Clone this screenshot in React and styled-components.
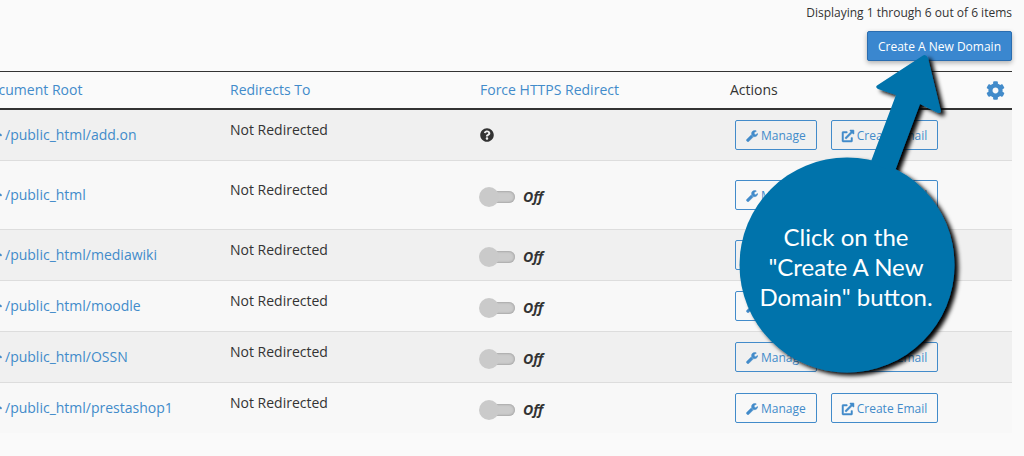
import React from "react";
import styled, { createGlobalStyle } from "styled-components";
import { FaHome, FaCog, FaQuestionCircle, FaExternalLinkAlt } from "react-icons/fa";

const GlobalStyle = createGlobalStyle`
  * { box-sizing: border-box; }
  body {
    margin: 0;
    background: #fafafa;
    color: #333;
    font-family: "Open Sans", "Noto Sans", sans-serif;
    font-size: 14px;
    line-height: 20px;
    overflow-x: hidden;
  }
`;

const Page = styled.main`
  position: relative;
  padding: 3px 12px 23px 0;
  overflow: hidden;
`;

const Toolbar = styled.div`
  display: flex;
  flex-direction: column;
  align-items: flex-end;
  gap: 8px;
  margin-bottom: 10px;
`;

const Summary = styled.div`
  font-size: 12px;
  line-height: 20px;
`;

const PrimaryButton = styled.button`
  height: 30px;
  padding: 1px 10px 0;
  border: 1px solid #2a6db0;
  border-radius: 2px;
  background: #3a87cf;
  box-shadow: 0 2px 5px rgba(0, 0, 0, 0.3);
  color: #fff;
  font: 500 12px/18px "Open Sans", sans-serif;
`;

const TableWrap = styled.div`
  margin-left: -28px;
`;

const Table = styled.table`
  width: 100%;
  table-layout: fixed;
  border-collapse: separate;
  border-spacing: 0;
`;

const Col = styled.col`
  width: ${(p) => p.$width};
`;

const HeadCell = styled.th`
  height: 39px;
  padding: 0 8px;
  border-top: 1px solid #333;
  border-bottom: 2px solid #333;
  text-align: left;
  font-weight: 400;
`;

const Row = styled.tr`
  height: ${(p) => (p.$tall ? "69px" : "51px")};
  background: #f8f8f8;

  &:nth-child(odd) { background: #f0f0f0; }
  &:first-child { height: 50px; }
  &:not(:first-child) td { border-top: 1px solid #ddd; }
`;

const Cell = styled.td`
  padding: 0 8px;
  vertical-align: middle;
`;

const CellBody = styled.div`
  display: flex;
  align-items: ${(p) => p.$align || "center"};
  gap: ${(p) => p.$gap || "0"};
  height: 30px;
  padding-left: ${(p) => p.$inset || "0"};
`;

const Link = styled.a`
  display: inline-flex;
  align-items: center;
  gap: 3px;
  color: #428bca;
  text-decoration: none;
`;

const OutlineButton = styled.button`
  display: inline-flex;
  align-items: center;
  gap: 3px;
  height: 30px;
  padding: 1px 10px 0;
  border: 1px solid #428bca;
  border-radius: 2px;
  background: transparent;
  color: #428bca;
  font: 400 12px/18px "Open Sans", sans-serif;
  white-space: nowrap;
`;

const LinkOutIcon = styled(FaExternalLinkAlt)`
  stroke: currentColor;
  stroke-width: 20px;
  overflow: visible;
`;

const IconButton = styled.button`
  display: flex;
  padding: 0;
  border: 0;
  background: none;
  color: ${(p) => p.$color};
`;

const SwitchLabel = styled.label`
  display: flex;
  align-items: center;
  gap: 8px;
  margin-left: -1px;
  padding-top: 4px;
  font-weight: 700;
  font-style: italic;
`;

const Switch = styled.input`
  appearance: none;
  display: flex;
  align-items: center;
  width: 36px;
  height: 20px;
  margin: 0;

  &::before {
    content: "";
    position: relative;
    z-index: 1;
    width: 20px;
    height: 20px;
    border-radius: 50%;
    background: #cacaca;
  }

  &::after {
    content: "";
    flex: 1;
    height: 12px;
    margin-left: -10px;
    border-radius: 6px;
    background: #cbcbcb;
    box-shadow: inset 0 0 2px 1px #aaa;
  }
`;

const Callout = styled.div`
  position: absolute;
  top: 40px;
  right: 56px;
  width: 240px;
  height: 350px;
  pointer-events: none;
`;

const CalloutShape = styled.svg`
  display: block;
  overflow: visible;
`;

const CalloutText = styled.p`
  position: absolute;
  top: 182px;
  left: 0;
  width: 236px;
  margin: 0;
  color: #fff;
  font: 400 24px/30px Lato, "Open Sans", sans-serif;
  text-align: center;
`;

const domains = [
  { root: "/public_html/add.on", addon: true },
  { root: "/public_html", tall: true },
  { root: "/public_html/mediawiki" },
  { root: "/public_html/moodle" },
  { root: "/public_html/OSSN" },
  { root: "/public_html/prestashop1" },
];

function WrenchIcon() {
  return (
    <svg width="12" height="12" viewBox="64 64 1664 1728" fill="currentColor" stroke="currentColor" strokeWidth="70" aria-hidden="true">
      <path d="M1092 1052l-682 682q-37 37-90 37-52 0-91-37l-106-108q-38-36-38-90 0-53 38-91l681-681q39 98 114.500 173.500t173.500 114.500zm634-435q0 39-23 106-47 134-164.500 217.500t-258.500 83.500q-185 0-316.500-131.500t-131.500-316.500 131.500-316.500 316.500-131.500q58 0 121.500 16.500t107.500 46.500q16 11 16 28t-16 28l-293 169v224l193 107q5-3 79-48.500t135.500-81 70.500-35.500q15 0 23.500 10t8.500 25z" />
    </svg>
  );
}

function DomainRow({ root, addon, tall }) {
  return (
    <Row $tall={tall}>
      <Cell>
        <CellBody $inset="6px">
          <Link href="#">
            <FaHome size={16} />
            {root}
          </Link>
        </CellBody>
      </Cell>
      <Cell>
        <CellBody $align="flex-start">Not Redirected</CellBody>
      </Cell>
      <Cell>
        <CellBody>
          {addon ? (
            <IconButton $color="#333" aria-label="Help">
              <FaQuestionCircle size={14} />
            </IconButton>
          ) : (
            <SwitchLabel>
              <Switch type="checkbox" role="switch" />
              Off
            </SwitchLabel>
          )}
        </CellBody>
      </Cell>
      <Cell>
        <CellBody $gap="14px" $inset="5px">
          <OutlineButton>
            <WrenchIcon />
            Manage
          </OutlineButton>
          <OutlineButton>
            <LinkOutIcon size={12} />
            Create Email
          </OutlineButton>
        </CellBody>
      </Cell>
      <Cell />
    </Row>
  );
}

export default function App() {
  return (
    <>
      <GlobalStyle />
      <Page>
        <Toolbar>
          <Summary>Displaying 1 through 6 out of 6 items</Summary>
          <PrimaryButton>Create A New Domain</PrimaryButton>
        </Toolbar>
        <TableWrap>
          <Table>
            <colgroup>
              <Col $width="250px" />
              <Col $width="250px" />
              <Col $width="250px" />
              <Col />
              <Col $width="34px" />
            </colgroup>
            <thead>
              <tr>
                <HeadCell><Link href="#">Document Root</Link></HeadCell>
                <HeadCell><Link href="#">Redirects To</Link></HeadCell>
                <HeadCell><Link href="#">Force HTTPS Redirect</Link></HeadCell>
                <HeadCell>Actions</HeadCell>
                <HeadCell>
                  <IconButton $color="#428bca" aria-label="Settings">
                    <FaCog size={19} />
                  </IconButton>
                </HeadCell>
              </tr>
            </thead>
            <tbody>
              {domains.map((d) => <DomainRow key={d.root} {...d} />)}
            </tbody>
          </Table>
        </TableWrap>
        <Callout>
          <CalloutShape width="240" height="350" viewBox="728 40 240 350" aria-hidden="true">
            <defs>
              <filter id="calloutShadow" x="-10%" y="-10%" width="125%" height="125%">
                <feDropShadow dx="4" dy="3" stdDeviation="2" floodColor="#000" floodOpacity="1" />
              </filter>
            </defs>
            <g fill="#0073ab" filter="url(#calloutShadow)">
              <circle cx="847" cy="265" r="107.5" />
              <path d="M923 55.500Q926 54 928 58L941 111.500Q940 114 936 112L920 104L895 171L870 164L896 95L878 89Q875 87 877 85.500Z" />
            </g>
          </CalloutShape>
          <CalloutText>
            Click on the<br />"Create A New<br />Domain" button.
          </CalloutText>
        </Callout>
      </Page>
    </>
  );
}
